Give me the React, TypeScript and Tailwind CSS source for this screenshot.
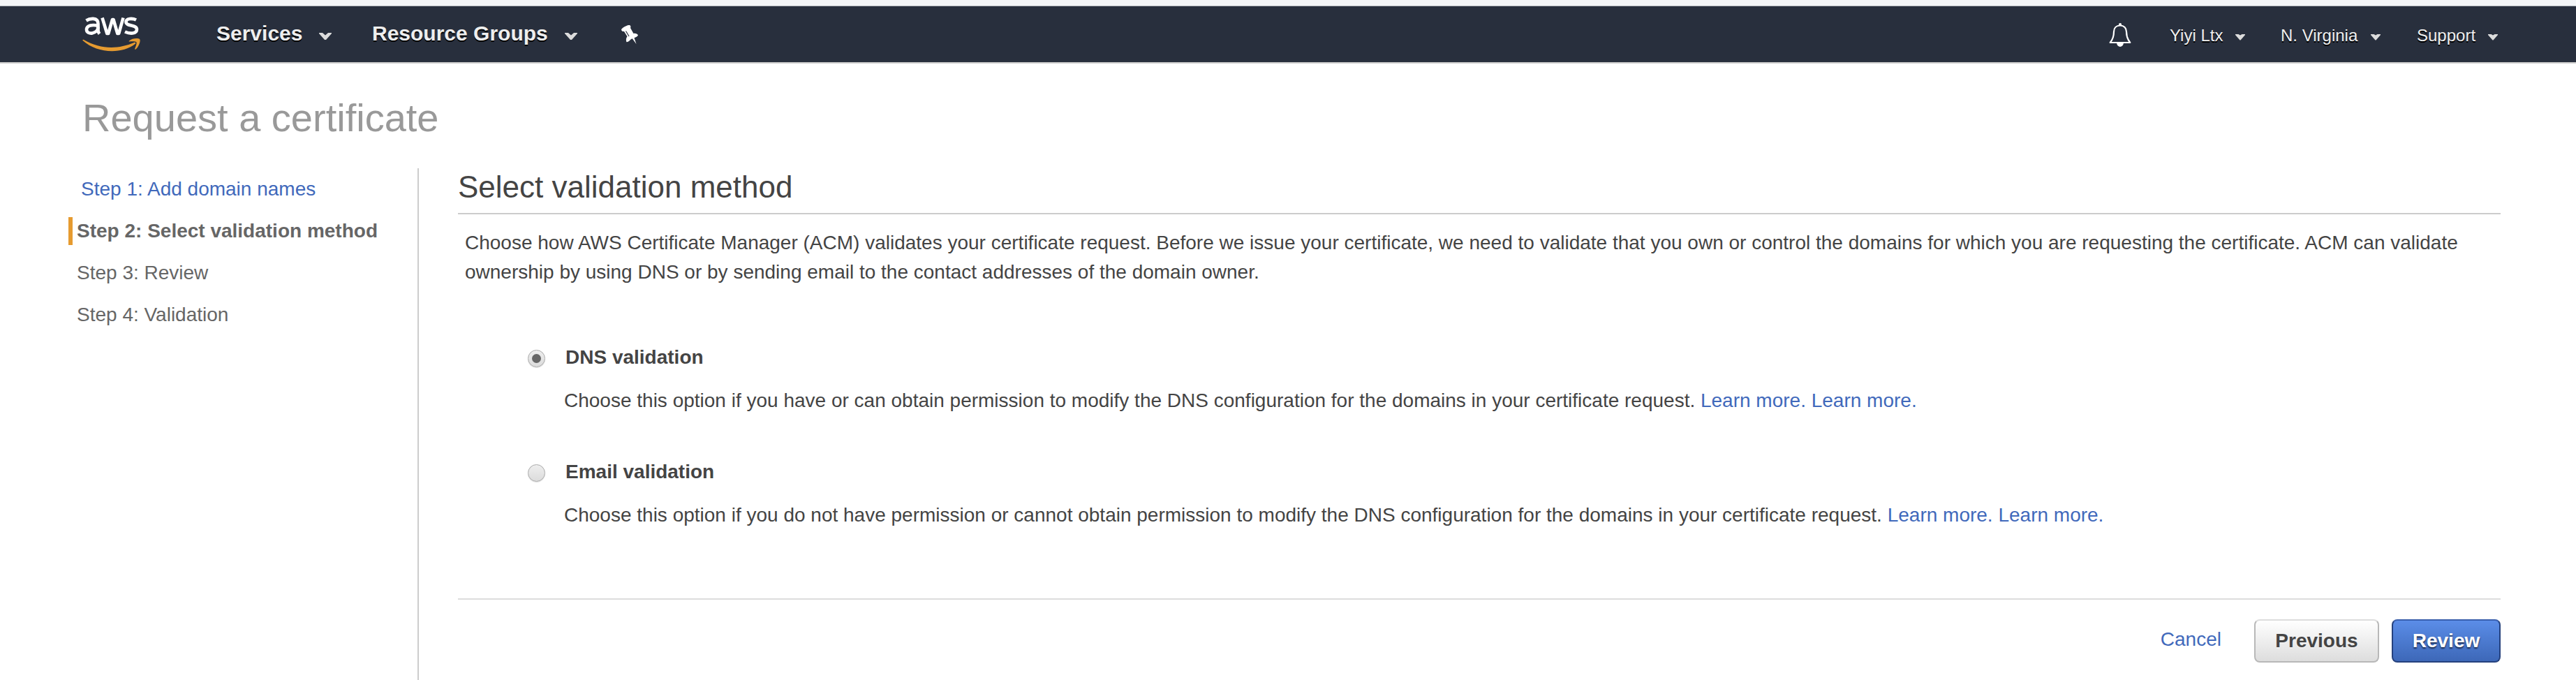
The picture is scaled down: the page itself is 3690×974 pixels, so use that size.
import React from "react";

function Chevron({ small = false }: { small?: boolean }) {
  return small ? (
    <svg width="14" height="9" viewBox="0 0 14 9" className="mt-[5px] block">
      <path d="M0 0h4.500l2.500 1.500 2.500-1.500H14v1L7.500 8.500h-1L0 1z" fill="#dcdcdc" />
    </svg>
  ) : (
    <svg width="18" height="10" viewBox="0 0 18 10" className="block">
      <path d="M0 0h5l4 3.400 4-3.400h5v1L10 10H8L0 1z" fill="#dcdcdc" />
    </svg>
  );
}

function AwsLogo() {
  return (
    <svg width="84" height="52" viewBox="0 0 84 52" className="block">
      <g fill="none" stroke="#fff" strokeWidth="4.600" strokeLinejoin="round">
        <path d="M5.500 5.500C10 2.500 22.500 0 22.500 10v9c0 2.500.7 4 2 5.500" />
        <path d="M22.500 13C15 10.800 6 12 6 18.500c0 8 16.500 6.500 16.500-4" />
        <path d="M28.500 1.500l6.800 22.500h1.900l5.800-20h1.500l5.800 20h1.900l6.300-22.500" />
        <path d="M77 4.500c-5-2.500-14.500-2.500-14.500 3C62.500 14 78 11 78 18c0 7-10.500 6.500-17 3.500" />
      </g>
      <path d="M.500 34C0 33 1 32.300 2.500 33.300 26 47 52 46.500 74 37c2-.8 3 .8 1.500 2C56 54 21 52.500.500 34z" fill="#e69b30" />
      <path d="M67 34.500c4-4 13-4.300 15-2.500s-1 11-5.500 14.500c-1 .7-1.700.3-1.200-1 1.500-3.500 3-8 2-9.200s-6-1-9.500-.8c-1.200.2-1.600-.4-.8-1z" fill="#e69b30" />
    </svg>
  );
}

function Pin() {
  return (
    <svg width="24" height="27" viewBox="0 0 24 27" className="block">
      <path d="M0 6.500C1 4 8-.500 12 0c1.500 1 1.800 2.500 1 4l4.500 8c3-.5 5.500.5 6.500 2.500-1 2-3 3-5.500 3.700L21.500 27l-5.800-7.700c-2.700.7-4.200 4.700-8.200 5-1.200-3-.5-6 1-8L4 9C2 9.300.5 8.500 0 6.500z" fill="#fff" />
      <path d="M6.500 8.500l4.500 7.500" stroke="#282f3d" strokeWidth="1.200" />
    </svg>
  );
}

function Bell() {
  return (
    <svg width="32" height="34" viewBox="0 0 32 34" className="block">
      <path d="M16 3.500c-5.500 0-9 3.500-9 9 0 7-2 11.500-5.300 15.500h28.600C27 24 25 19.500 25 12.500c0-5.500-3.500-9-9-9z" fill="none" stroke="#fff" strokeWidth="2.200" strokeLinejoin="round" />
      <path d="M14 3.500V1.800a2 1.800 0 0 1 4 0v1.700zM11 28.500h10c-.5 7.200-9.500 7.200-10 0z" fill="#fff" />
    </svg>
  );
}

function Menu({ label, className }: { label: string; className: string }) {
  return (
    <div className={`flex items-center text-[24px] leading-[28px] ${className}`}>
      <span className="flex-1 whitespace-nowrap">{label}</span>
      <Chevron small />
    </div>
  );
}

function Option({ title, text, checked = false }: { title: string; text: string; checked?: boolean }) {
  return (
    <div className="flex h-[164px]">
      <span className="mt-[10px] flex size-[25px] items-center justify-center rounded-full border border-[#aaa] bg-linear-to-b from-[#eee] to-[#dcdcdc] shadow-[0_1px_1px_#ddd]">
        {checked && <span className="size-[13px] rounded-full bg-[#666]" />}
      </span>
      <div className="ml-[27px] whitespace-nowrap leading-[42px]">
        <h3 className="pl-[2px] font-bold">{title}</h3>
        <p className="mt-[20px]">
          {text} <a className="text-[#4169bb]">Learn more.</a> <a className="text-[#4169bb]">Learn more.</a>
        </p>
      </div>
    </div>
  );
}

export default function App() {
  return (
    <div className="h-[974px] w-[3690px] overflow-hidden bg-white font-['Liberation_Sans',Arial,sans-serif] text-[28px] text-[#444]">
      <div className="h-[9px] border-b border-[#b9bcc0] bg-[#f3f5f7]" />
      <header className="flex h-[82px] items-start border-b-2 border-[#ccc] bg-[#282f3d] text-[#eee] [text-shadow:0_2px_0_#000]">
        <div className="ml-[118px] mt-[15px]"><AwsLogo /></div>
        <div className="ml-[108px] mt-[22px] flex items-center text-[30px] font-bold leading-[34px]">
          <span className="w-[147px]">Services</span>
          <div className="pt-[8px]"><Chevron /></div>
          <span className="ml-[58px] w-[276px]">Resource Groups</span>
          <div className="pt-[8px]"><Chevron /></div>
        </div>
        <div className="ml-[63px] mt-[27px]"><Pin /></div>
        <div className="ml-auto mr-[112px] flex">
          <div className="mt-[24px]"><Bell /></div>
          <Menu label="Yiyi Ltx" className="ml-[55px] mt-[26px] w-[108px]" />
          <Menu label="N. Virginia" className="ml-[51px] mt-[26px] w-[143px]" />
          <Menu label="Support" className="ml-[52px] mt-[26px] w-[116px]" />
        </div>
      </header>
      <h1 className="ml-[118px] mt-[46px] text-[56px] leading-[64px] text-[#999]">Request a certificate</h1>
      <div className="mt-[40px] flex h-[733px]">
        <nav className="flex w-[598px] flex-col gap-[20px] pl-[98px] pt-[10px] leading-[40px] text-[#666]">
          <a className="pl-[18px] text-[#4169bb]">Step 1: Add domain names</a>
          <div className="border-l-[6px] border-[#e69b30] pl-[6px] font-bold">Step 2: Select validation method</div>
          <div className="pl-[12px]">Step 3: Review</div>
          <div className="pl-[12px]">Step 4: Validation</div>
        </nav>
        <main className="w-[2984px] border-l-2 border-[#ccc] pl-[56px]">
          <h2 className="h-[66px] border-b-2 border-[#ccc] text-[44px] leading-[54px]">Select validation method</h2>
          <p className="ml-[10px] mt-[20px] w-[2890px] leading-[42px]">
            Choose how AWS Certificate Manager (ACM) validates your certificate request. Before we issue your certificate, we need to validate that you own or control the domains for which you are requesting the certificate. ACM can validate ownership by using DNS or by sending email to the contact addresses of the domain owner.
          </p>
          <div className="ml-[100px] mt-[80px]">
            <Option checked title="DNS validation" text="Choose this option if you have or can obtain permission to modify the DNS configuration for the domains in your certificate request." />
            <Option title="Email validation" text="Choose this option if you do not have permission or cannot obtain permission to modify the DNS configuration for the domains in your certificate request." />
          </div>
          <div className="mt-[38px] flex justify-end border-t-2 border-[#ddd] pt-[28px]">
            <a className="mr-[47px] mt-[9px] leading-[40px] text-[#4169bb]">Cancel</a>
            <button className="h-[62px] w-[179px] rounded-[8px] border-2 border-[#b8b8b8] border-t-[#ddd] bg-linear-to-b from-white to-[#ddd] font-bold leading-[56px] [text-shadow:0_2px_0_#eee]">Previous</button>
            <button className="ml-[18px] h-[62px] w-[156px] rounded-[8px] border-2 border-[#25417d] border-t-[#3a5fad] bg-linear-to-b from-[#5b8de8] to-[#3d68b8] font-bold leading-[56px] text-white [text-shadow:0_2px_2px_#1a2a4d]">Review</button>
          </div>
        </main>
      </div>
    </div>
  );
}
